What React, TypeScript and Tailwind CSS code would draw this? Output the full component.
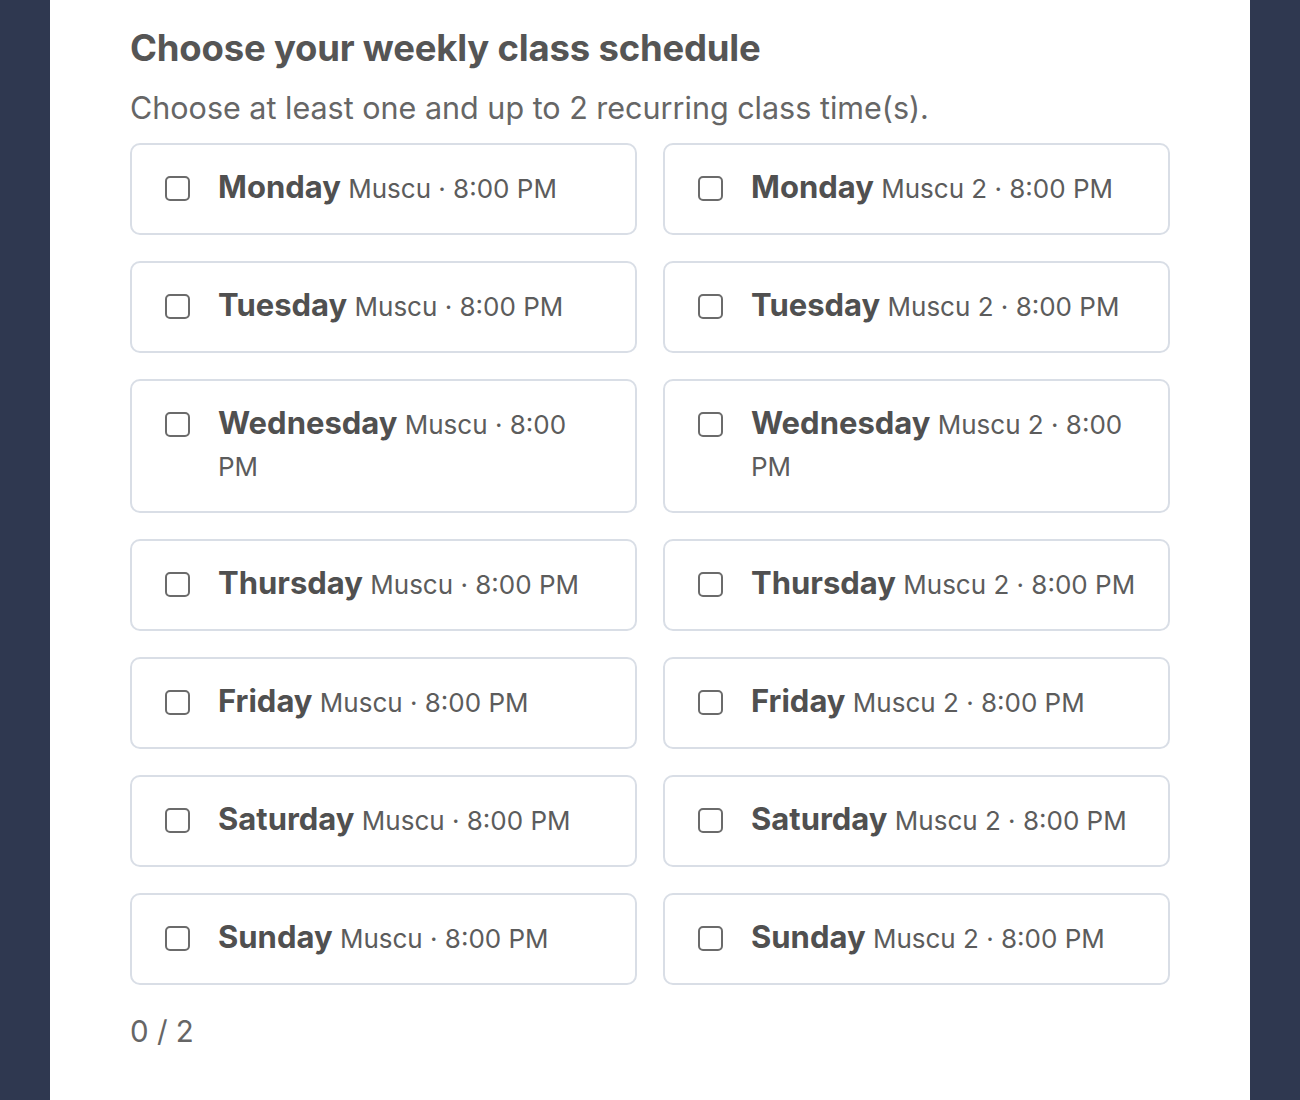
const days = ["Monday", "Tuesday", "Wednesday", "Thursday", "Friday", "Saturday", "Sunday"];

function Option({ day, klass }: { day: string; klass: string }) {
  return (
    <label className="flex items-start gap-[28px] rounded-[10px] border-2 border-[#d9dee6] bg-white pl-[33px] pr-6 py-[23px] cursor-pointer">
      <span className="mt-[8px] h-[25px] w-[25px] shrink-0 rounded-[5px] border-2 border-[#6b6b6b] bg-white" />
      <span className="text-[26px] leading-[42px] text-[#5c5c5c]">
        <span className="text-[31px] font-bold leading-[38px] text-[#505050]">{day}</span>{" "}
        {klass} · 8:00 PM
      </span>
    </label>
  );
}

export default function App() {
  return (
    <div className="min-h-[1100px] bg-[#2f3850] font-['Inter',sans-serif]">
      <div className="mx-auto min-h-[1100px] w-[1200px] bg-white px-20 pt-[26px]">
        <h1 className="text-[36.5px] font-bold leading-[44px] tracking-[-0.2px] text-[#555555]">
          Choose your weekly class schedule
        </h1>
        <p className="mt-[20px] text-[30.5px] leading-[36px] text-[#666666]">
          Choose at least one and up to 2 recurring class time(s).
        </p>
        <div className="mt-[17px] grid grid-cols-2 gap-x-[26px] gap-y-[26px]">
          {days.map((d) => [
            <Option key={d + "1"} day={d} klass="Muscu" />,
            <Option key={d + "2"} day={d} klass="Muscu 2" />,
          ])}
        </div>
        <div className="mt-[28px] text-[29.5px] leading-[36px] text-[#666666]">0 / 2</div>
      </div>
    </div>
  );
}
